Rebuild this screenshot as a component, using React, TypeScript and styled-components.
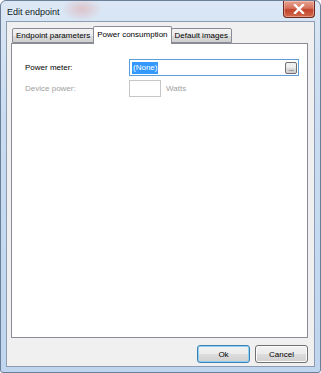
import styled, { createGlobalStyle } from "styled-components";

const GlobalStyle = createGlobalStyle`
  html, body {
    margin: 0;
    padding: 0;
    background: #ffffff;
  }
  * {
    box-sizing: border-box;
  }
`;

function App() {
  return (
    <>
      <GlobalStyle />
      <Window>
        <TitleBar>
          <Title>Edit endpoint</Title>
          <CloseButton>
            <svg width="12" height="10" viewBox="0 0 12 10">
              <path
                d="M2 1 L10 9 M10 1 L2 9"
                stroke="#ffffff"
                strokeWidth="2.4"
                strokeLinecap="square"
              />
            </svg>
          </CloseButton>
        </TitleBar>
        <Client>
          <TabStrip>
            <Tab>Endpoint parameters</Tab>
            <Tab $active>Power consumption</Tab>
            <Tab>Default images</Tab>
          </TabStrip>
          <Panel>
            <FormGrid>
              <Label>Power meter:</Label>
              <ComboField $focused>
                <Selected>(None)</Selected>
                <BrowseButton>
                  <Dots>...</Dots>
                </BrowseButton>
              </ComboField>
              <Label $disabled>Device power:</Label>
              <Inline>
                <SmallField />
                <Unit>Watts</Unit>
              </Inline>
            </FormGrid>
          </Panel>
          <ButtonRow>
            <DialogButton $default>Ok</DialogButton>
            <DialogButton>Cancel</DialogButton>
          </ButtonRow>
        </Client>
      </Window>
    </>
  );
}

const Window = styled.div`
  width: 321px;
  height: 373px;
  display: flex;
  flex-direction: column;
  padding: 0 5px 5px 5px;
  border: 1px solid #6b7f98;
  border-radius: 6px 6px 3px 3px;
  background: linear-gradient(180deg, #dbe7f5 0%, #c9dcf1 30%, #c0d5ee 100%);
  font-family: "Liberation Sans", Arial, sans-serif;
  font-size: 8px;
  color: #000000;
`;

const TitleBar = styled.div`
  height: 20px;
  display: flex;
  align-items: flex-start;
  justify-content: space-between;
  background: radial-gradient(
      ellipse 20px 12px at 76px 8px,
      rgba(225, 160, 160, 0.5),
      rgba(225, 160, 160, 0) 100%
    );
`;

const Title = styled.div`
  padding: 6px 0 0 1px;
  font-size: 9px;
  color: #0f1a26;
  text-shadow: 0 0 6px rgba(255, 255, 255, 0.9);
`;

const CloseButton = styled.div`
  width: 32px;
  height: 17px;
  display: flex;
  align-items: center;
  justify-content: center;
  border: 1px solid #6a2a22;
  border-top: none;
  border-radius: 0 0 4px 4px;
  background: linear-gradient(180deg, #e8a493 0%, #d4715b 45%, #c1442b 55%, #d26a4c 100%);
  box-shadow: inset 0 0 0 1px rgba(255, 210, 200, 0.45);
`;

const Client = styled.div`
  flex: 1;
  display: flex;
  flex-direction: column;
  padding: 3px 6px 3px 4px;
  border: 1px solid #8c9db3;
  background: #f0f0f0;
`;

const TabStrip = styled.div`
  display: flex;
  align-items: flex-end;
  height: 18px;
  padding-left: 1px;
  position: relative;
  z-index: 1;
`;

const Tab = styled.div<{ $active?: boolean }>`
  height: ${(p) => (p.$active ? "18px" : "15px")};
  padding: ${(p) => (p.$active ? "3px 3px 0 3px" : "2px 3px 0 3px")};
  margin: ${(p) => (p.$active ? "0 -1px -1px -1px" : "0")};
  border: 1px solid #898c95;
  border-bottom: ${(p) => (p.$active ? "none" : "1px solid #898c95")};
  border-radius: 2px 2px 0 0;
  background: ${(p) =>
    p.$active
      ? "#ffffff"
      : "linear-gradient(180deg, #f2f2f2 0%, #ebebeb 50%, #dddddd 51%, #cfcfcf 100%)"};
  position: ${(p) => (p.$active ? "relative" : "static")};
  z-index: ${(p) => (p.$active ? 2 : 0)};
  white-space: nowrap;
  & + & {
    border-left: ${(p) => (p.$active ? "1px solid #898c95" : "none")};
  }
`;

const Panel = styled.div`
  flex: 1;
  border: 1px solid #898c95;
  background: #ffffff;
  padding: 15px 8px 0 13px;
`;

const FormGrid = styled.div`
  display: grid;
  grid-template-columns: 104px 1fr;
  row-gap: 4px;
  align-items: center;
`;

const Label = styled.div<{ $disabled?: boolean }>`
  color: ${(p) => (p.$disabled ? "#a0a0a0" : "#000000")};
`;

const ComboField = styled.div<{ $focused?: boolean }>`
  height: 17px;
  display: flex;
  align-items: center;
  justify-content: space-between;
  padding: 0 1px 0 2px;
  border: 1px solid ${(p) => (p.$focused ? "#5e9ed6" : "#c6c6c6")};
  background: #ffffff;
`;

const Selected = styled.span`
  background: #3399ff;
  color: #ffffff;
  padding: 1px 1px;
  line-height: 10px;
`;

const BrowseButton = styled.div`
  width: 12px;
  height: 12px;
  display: flex;
  align-items: flex-end;
  justify-content: center;
  border: 1px solid #707070;
  border-radius: 2px;
  background: linear-gradient(180deg, #f2f2f2 0%, #ebebeb 50%, #dddddd 51%, #cfcfcf 100%);
`;

const Dots = styled.span`
  font-size: 8px;
  line-height: 8px;
  letter-spacing: -0.5px;
  color: #333;
`;

const Inline = styled.div`
  display: flex;
  align-items: center;
  gap: 5px;
`;

const SmallField = styled.div`
  width: 32px;
  height: 17px;
  border: 1px solid #c6c6c6;
  background: #ffffff;
`;

const Unit = styled.span`
  color: #a0a0a0;
`;

const ButtonRow = styled.div`
  display: flex;
  justify-content: flex-end;
  gap: 5px;
  padding-top: 7px;
`;

const DialogButton = styled.div<{ $default?: boolean }>`
  width: 53px;
  height: 18px;
  display: flex;
  align-items: center;
  justify-content: center;
  border: 1px solid ${(p) => (p.$default ? "#3c7fb1" : "#707070")};
  border-radius: 3px;
  background: linear-gradient(180deg, #f2f2f2 0%, #ebebeb 50%, #dddddd 51%, #cfcfcf 100%);
  box-shadow: ${(p) =>
    p.$default ? "inset 0 0 0 1px #8fd0f5" : "inset 0 0 0 1px #fcfcfc"};
`;

export default App;
